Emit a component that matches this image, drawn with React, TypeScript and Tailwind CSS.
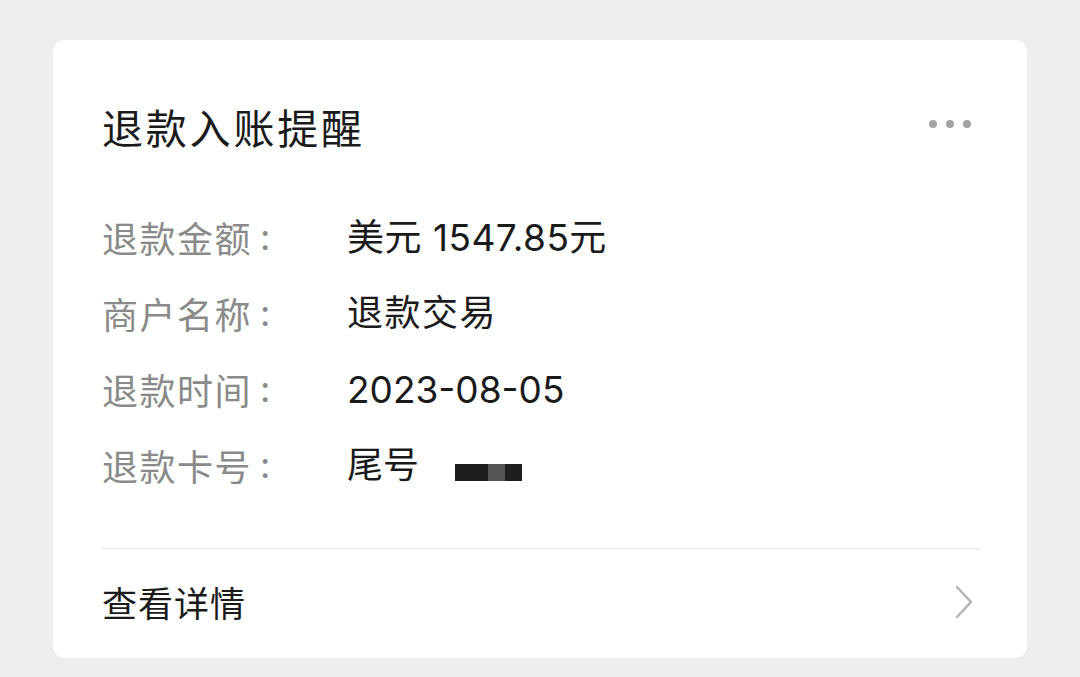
import React from "react";

const Row = ({ label, children }: { label: string; children: React.ReactNode }) => (
  <div className="flex items-center h-[76px]">
    <div className="w-[245px] flex items-center text-[36px] text-[#8a8a8a] tracking-[1.5px] leading-none">
      <span>{label}</span>
      <span className="ml-[8px]" style={{ fontFamily: 'Inter, sans-serif' }}>:</span>
    </div>
    <div
      className="text-[37px] text-[#1a1a1a] leading-none flex items-center"
      style={{ fontFamily: 'Inter, "Noto Sans CJK SC", sans-serif' }}
    >
      {children}
    </div>
  </div>
);

export default function App() {
  return (
    <div
      className="w-[1080px] h-[677px] bg-[#ededed] pt-[40px] pl-[53px]"
      style={{ fontFamily: '"Noto Sans CJK SC", "Noto Sans", sans-serif' }}
    >
      <div className="w-[974px] h-[618px] bg-white rounded-[12px] px-[49px] flex flex-col">
        <div className="flex items-center justify-between h-[172px]">
          <div className="text-[41px] text-[#1a1a1a] tracking-[2.8px] leading-none">退款入账提醒</div>
          <div className="flex gap-[9px] mr-[7px] -mt-[4px]">
            <span className="w-[8px] h-[8px] rounded-full bg-[#a3a3a3]" />
            <span className="w-[8px] h-[8px] rounded-full bg-[#a3a3a3]" />
            <span className="w-[8px] h-[8px] rounded-full bg-[#a3a3a3]" />
          </div>
        </div>
        <div className="-mt-[13px]">
          <Row label="退款金额">
            <span className="tracking-[0.5px]">美元 1547.85元</span>
          </Row>
          <Row label="商户名称">
            <span className="tracking-[1.5px] text-[36px]">退款交易</span>
          </Row>
          <Row label="退款时间">2023-08-05</Row>
          <Row label="退款卡号">
            <span className="text-[36px]">尾号</span>
            <span className="ml-[36px] mt-[14px] flex h-[17px]">
              <span className="w-[33px] bg-[#1e1e1e]" />
              <span className="w-[17px] bg-[#555555]" />
              <span className="w-[17px] bg-[#1e1e1e]" />
            </span>
          </Row>
        </div>
        <div className="mt-[45px] border-t border-[#e5e5e5] mr-[-2px]" />
        <div className="flex items-center justify-between h-[104px]">
          <div className="text-[35px] text-[#1a1a1a] tracking-[1px] leading-none">查看详情</div>
          <svg width="20" height="34" viewBox="0 0 20 34" className="mr-[4px] mt-[2px]">
            <path d="M3 2 L17 17 L3 32" fill="none" stroke="#b3b3b3" strokeWidth="2.5" strokeLinecap="round" strokeLinejoin="round" />
          </svg>
        </div>
      </div>
    </div>
  );
}
